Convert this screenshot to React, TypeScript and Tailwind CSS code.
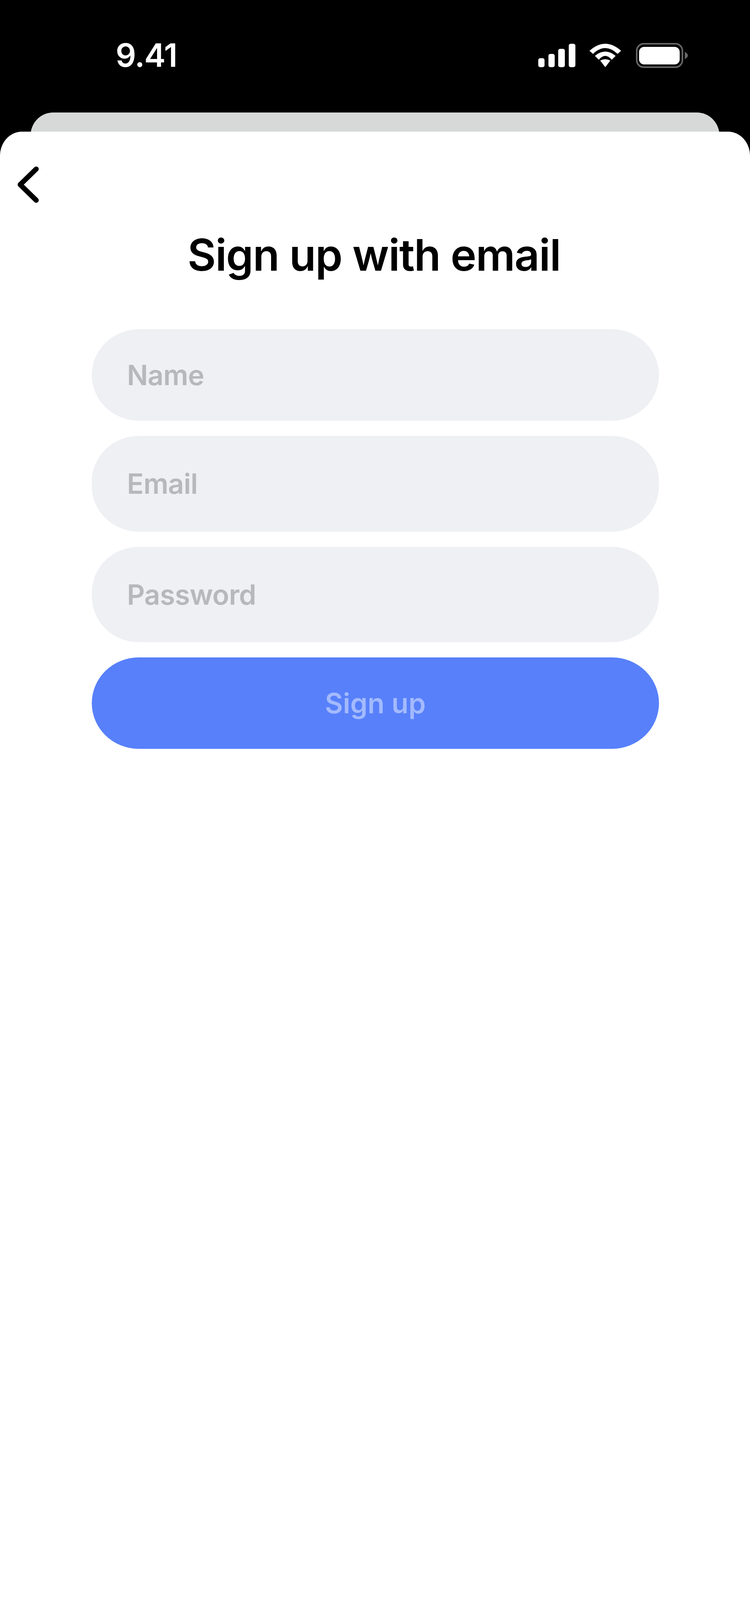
const fields = [
  { label: 'Name', height: 'h-[234px]' },
  { label: 'Email', height: 'h-[245px]' },
  { label: 'Password', height: 'h-[244px]' },
];

function StatusIcons() {
  return (
    <div className="flex items-start gap-[36px]">
      <svg width="95" height="60" viewBox="0 0 95 60" className="fill-white">
        <rect x="0" y="37" width="16" height="23" rx="5" />
        <rect x="26" y="26" width="16" height="34" rx="5" />
        <rect x="51" y="13" width="17" height="47" rx="5" />
        <rect x="78" y="0" width="17" height="60" rx="5" />
      </svg>
      <svg width="81" height="60" viewBox="0 0 81 60" className="fill-white">
        <path d="M40.5 60 L27.5 43 Q40.5 36 53.5 43 Z" />
        <path d="M14 31 Q40.5 9 67 31 L57 41 Q40.5 21 24 41 Z" />
        <path d="M0 18 Q40.5 -18 81 18 L72 26 Q40.5 -4 9 26 Z" />
      </svg>
      <svg width="133" height="64" viewBox="0 0 133 64" className="-mt-[2px] ml-[2px]">
        <rect x="2" y="2" width="117" height="60" rx="18" fill="none" stroke="#666666" strokeWidth="4" />
        <rect x="8" y="10" width="104" height="45" rx="13" fill="#ffffff" />
        <path d="M125 23 C130 25 133 29 133 32 C133 35 130 39 125 41 Z" fill="#666666" />
      </svg>
    </div>
  );
}

export default function App() {
  return (
    <div className="w-[1920px] h-[4162px] bg-black flex flex-col font-['Inter',sans-serif]">
      <div className="h-[288px] shrink-0 pt-[112px] pl-[296px] pr-[159px] flex justify-between items-start">
        <span className="text-[82px] leading-[60px] font-semibold tracking-[-1.5px] text-white">9.41</span>
        <StatusIcons />
      </div>
      <div className="mx-[78px] h-[60px] -mb-[11px] shrink-0 bg-[#d7d9d8] rounded-t-[58px_60px]" />
      <div className="relative flex-1 bg-white rounded-t-[56px_62px] flex flex-col">
        <div className="pt-[89px] pl-[45px]">
          <svg width="54" height="93" viewBox="0 0 54 93" fill="none" className="block">
            <path
              d="M47.7 6.7 L6.7 46.7 L47.7 86.7"
              stroke="#000000"
              strokeWidth="13"
              strokeLinecap="round"
              strokeLinejoin="round"
            />
          </svg>
        </div>
        <h1 className="mt-[65px] pr-[5px] text-center text-[112px] leading-[136px] font-semibold tracking-[-1.7px] text-black">
          Sign up with email
        </h1>
        <div className="mt-[123px] ml-[235px] mr-[233px] flex flex-col gap-[39px]">
          {fields.map((f) => (
            <div
              key={f.label}
              className={`${f.height} rounded-[120px/117px] bg-[#eff0f4] pl-[90px] flex items-center text-[71px] font-semibold tracking-[-0.8px] text-[#b7b8bb]`}
            >
              {f.label}
            </div>
          ))}
          <button className="h-[234px] rounded-[120px/117px] bg-[#5780fa] text-[71px] font-semibold text-[#a3baff]">
            Sign up
          </button>
        </div>
        <div className="mt-auto mb-[37px] self-center w-[683px] h-[26px] rounded-full bg-black" />
      </div>
    </div>
  );
}
